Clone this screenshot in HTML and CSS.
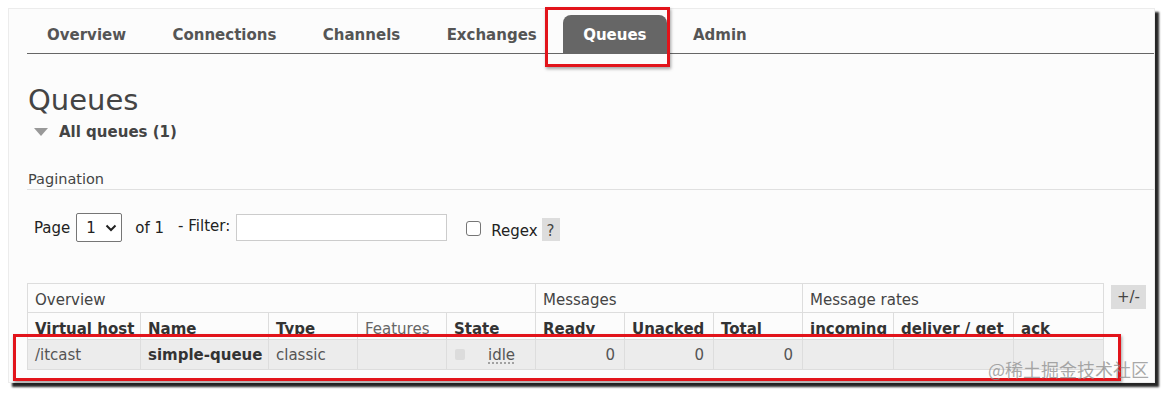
FILE: index.html
```html
<!DOCTYPE html>
<html>
<head>
<meta charset="utf-8">
<link rel="stylesheet" href="styles.css">
</head>
<body>
<div class="frame">
  <nav class="tabs">
    <ul>
      <li>Overview</li>
      <li>Connections</li>
      <li>Channels</li>
      <li>Exchanges</li>
      <li class="active">Queues</li>
      <li>Admin</li>
    </ul>
  </nav>
  <h1 class="title">Queues</h1>
  <h2 class="section"><span class="tri"></span>All queues (1)</h2>
  <h3 class="subsection">Pagination</h3>
  <div class="pager">
    <span class="lbl">Page</span>
    <span class="select">1<svg class="chev" viewBox="0 0 12 8" width="12" height="8"><path d="M1.5 1.5 L6 6 L10.5 1.5" fill="none" stroke="#222" stroke-width="2"/></svg></span>
    <span class="of">of 1</span>
    <span class="filter">- Filter:</span>
    <span class="input"></span>
    <span class="check"></span>
    <span class="regex">Regex</span>
    <span class="help">?</span>
  </div>
  <div class="tablewrap">
    <table class="list">
      <colgroup>
        <col class="c113"><col class="c128"><col class="c89"><col class="c89"><col class="c89">
        <col class="c89"><col class="c89"><col class="c89">
        <col class="c91"><col class="c120"><col class="c90">
      </colgroup>
      <thead>
        <tr class="group">
          <th colspan="5">Overview</th>
          <th colspan="3">Messages</th>
          <th colspan="3">Message rates</th>
        </tr>
        <tr class="cols">
          <th>Virtual host</th>
          <th>Name</th>
          <th>Type</th>
          <th class="light">Features</th>
          <th>State</th>
          <th>Ready</th>
          <th>Unacked</th>
          <th>Total</th>
          <th>incoming</th>
          <th>deliver / get</th>
          <th>ack</th>
        </tr>
      </thead>
      <tbody>
        <tr class="row">
          <td>/itcast</td>
          <td class="name">simple-queue</td>
          <td>classic</td>
          <td></td>
          <td><span class="state"><span class="sq"></span><span class="idle">idle</span></span></td>
          <td class="num">0</td>
          <td class="num">0</td>
          <td class="num">0</td>
          <td></td>
          <td></td>
          <td></td>
        </tr>
      </tbody>
    </table>
    <span class="toggle">+/-</span>
  </div>
  <div class="mark mark-tab"></div>
  <div class="mark mark-row"></div>
  <div class="watermark">@稀土掘金技术社区</div>
</div>
</body>
</html>
```

FILE: styles.css
```css
html, body {
  margin: 0;
  padding: 0;
  background: #ffffff;
}
body {
  font-family: "DejaVu Sans", Verdana, sans-serif;
  color: #444;
  width: 1163px;
  height: 393px;
  overflow: hidden;
}
.frame {
  position: relative;
  box-sizing: border-box;
  margin: 8px 0 0 8px;
  width: 1147px;
  height: 375px;
  background: #fcfcfc;
  border: 1px solid #ececec;
  box-shadow: 4px 4px 2px rgba(0, 0, 0, 0.85);
  padding: 6px 0 0 18px;
  overflow: visible;
}
.tabs ul {
  list-style: none;
  margin: 0;
  padding: 0;
  display: flex;
  border-bottom: 1px solid #666;
}
.tabs li {
  height: 38px;
  line-height: 40px;
  padding: 0 20px;
  margin-right: 6.4px;
  font-size: 15px;
  font-weight: bold;
  color: #555;
  border-radius: 8px 8px 0 0;
}
.tabs li.active {
  background: #666;
  color: #fff;
}
.title {
  margin: 29px 0 0 1px;
  font-size: 29px;
  line-height: 34px;
  font-weight: normal;
  color: #444;
}
.section {
  margin: 5px 0 0 7px;
  font-size: 15px;
  line-height: 20px;
  font-weight: bold;
  color: #444;
  display: flex;
  align-items: center;
}
.tri {
  width: 0;
  height: 0;
  border-left: 7px solid transparent;
  border-right: 7px solid transparent;
  border-top: 8px solid #999;
  margin-right: 11px;
}
.subsection {
  margin: 27px 0 0 0;
  padding-left: 1px;
  font-size: 14.5px;
  line-height: 20px;
  font-weight: normal;
  color: #444;
  border-bottom: 1px solid #e0e0e0;
}
.pager {
  height: 93px;
  box-sizing: border-box;
  padding: 23px 0 0 7px;
  display: flex;
  align-items: flex-start;
  font-size: 15px;
  color: #222;
}
.lbl {
  line-height: 30px;
  margin-right: 6px;
}
.select {
  box-sizing: border-box;
  width: 46px;
  height: 29px;
  border: 1px solid #767676;
  border-radius: 2px;
  background: #fff;
  display: flex;
  align-items: center;
  padding-left: 9px;
  font-size: 15px;
}
.chev {
  margin-left: 9px;
}
.of {
  line-height: 30px;
  margin-left: 13px;
}
.filter {
  line-height: 26px;
  margin-left: 14px;
}
.input {
  box-sizing: border-box;
  width: 211px;
  height: 27px;
  margin-left: 6px;
  margin-top: 1px;
  border: 1px solid #ccc;
  background: #fff;
}
.check {
  box-sizing: border-box;
  width: 15px;
  height: 15px;
  margin: 8px 0 0 19px;
  border: 1px solid #767676;
  border-radius: 3px;
  background: #fff;
}
.regex {
  line-height: 36px;
  margin-left: 10px;
}
.help {
  margin: 5px 0 0 4px;
  width: 18px;
  height: 23px;
  line-height: 27px;
  text-align: center;
  background: #ddd;
  color: #444;
  font-size: 15px;
}
.tablewrap {
  display: flex;
  align-items: flex-start;
}
.list {
  border-collapse: collapse;
  table-layout: fixed;
  width: 1076px;
  font-size: 15px;
  color: #444;
}
.c113 { width: 113px; }
.c128 { width: 128px; }
.c89 { width: 89px; }
.c91 { width: 91px; }
.c120 { width: 120px; }
.c90 { width: 90px; }
.list th, .list td {
  border: 1px solid #ddd;
  text-align: left;
  padding: 0 7px;
  white-space: nowrap;
  overflow: hidden;
}
.list tr.group { height: 29px; }
.list tr.cols { height: 27px; }
.list tr.row { height: 30px; }
.list .group th {
  font-weight: normal;
  color: #444;
  padding-top: 3px;
}
.list .cols th {
  font-weight: bold;
  color: #333;
  padding-top: 6px;
}
.list .cols th.light {
  font-weight: normal;
  color: #666;
}
.list .row td {
  background: #ececec;
  color: #555;
}
.list .row td.name {
  font-weight: bold;
  color: #333;
}
.list .row td.num {
  text-align: right;
  padding-right: 9px;
}
.state {
  display: flex;
  align-items: center;
}
.sq {
  width: 10px;
  height: 11px;
  border-radius: 2px;
  background: #dcdcdc;
  margin-left: 1px;
}
.idle {
  margin-left: 23px;
  text-decoration: underline dotted #888;
  text-underline-offset: 3px;
}
.toggle {
  margin: 2px 0 0 7px;
  width: 35px;
  height: 24px;
  line-height: 24px;
  text-align: center;
  background: #ddd;
  font-size: 15px;
  color: #444;
}
.mark {
  position: absolute;
  box-sizing: border-box;
  border: 3px solid #e2141b;
  box-shadow: 1px 2px 3px rgba(0, 0, 0, 0.35);
}
.mark-tab {
  left: 536px;
  top: -2px;
  width: 125px;
  height: 60px;
}
.mark-row {
  left: 4px;
  top: 325px;
  width: 1108px;
  height: 47px;
}
.watermark {
  position: absolute;
  left: 979px;
  top: 349px;
  font-family: "Noto Sans CJK SC", "DejaVu Sans", sans-serif;
  font-size: 18px;
  line-height: 22px;
  color: rgba(140, 140, 140, 0.75);
}
```
